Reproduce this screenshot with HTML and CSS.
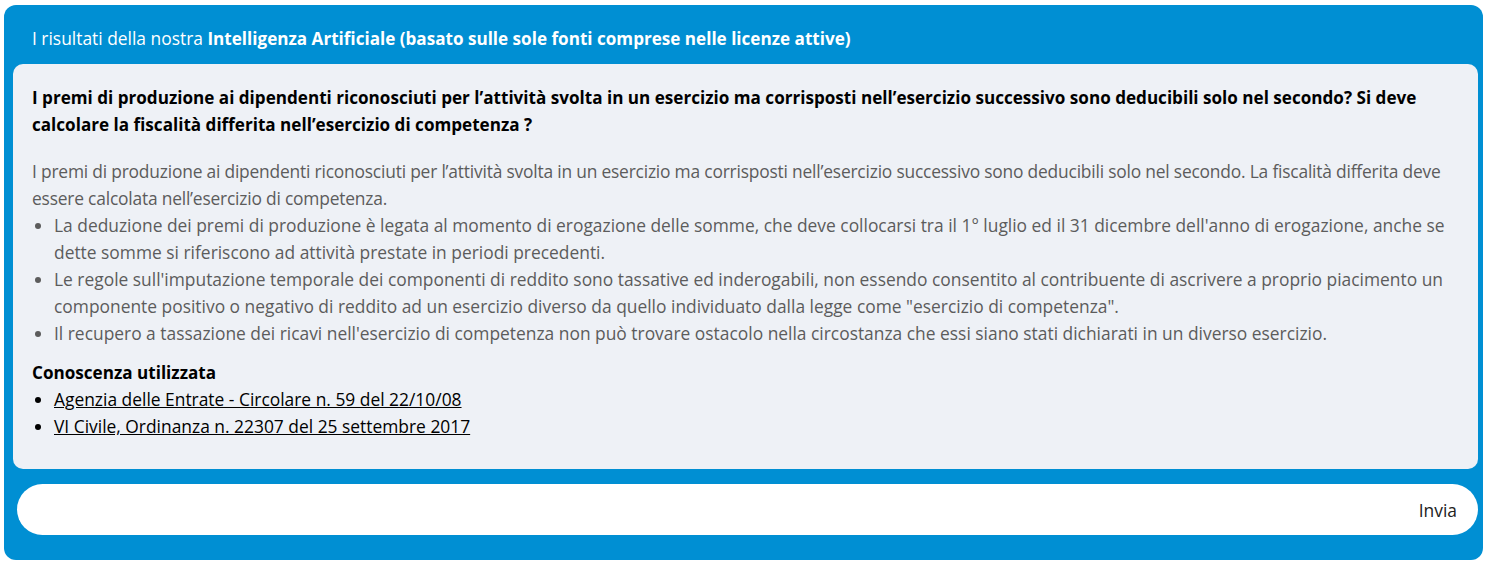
FILE: index.html
```html
<!DOCTYPE html>
<html lang="it">
<head>
    <meta charset="UTF-8">
    <title>Intelligenza Artificiale</title>
    <link rel="stylesheet" href="styles.css">
</head>
<body>
    <div class="panel">
        <div class="panel-title">I risultati della nostra <b>Intelligenza Artificiale (basato sulle sole fonti comprese nelle licenze attive)</b></div>

        <!-- Answer -->
        <div class="answer">
            <p class="question">I premi di produzione ai dipendenti riconosciuti per l’attività svolta in un esercizio ma corrisposti nell’esercizio successivo sono deducibili solo nel secondo? Si deve calcolare la fiscalità differita nell’esercizio di competenza ?</p>
            <div class="reply">
                <p>I premi di produzione ai dipendenti riconosciuti per l’attività svolta in un esercizio ma corrisposti nell’esercizio successivo sono deducibili solo nel secondo. La fiscalità differita deve essere calcolata nell’esercizio di competenza.</p>
                <ul>
                    <li>La deduzione dei premi di produzione è legata al momento di erogazione delle somme, che deve collocarsi tra il 1° luglio ed il 31 dicembre dell'anno di erogazione, anche se dette somme si riferiscono ad attività prestate in periodi precedenti.</li>
                    <li>Le regole sull'imputazione temporale dei componenti di reddito sono tassative ed inderogabili, non essendo consentito al contribuente di ascrivere a proprio piacimento un componente positivo o negativo di reddito ad un esercizio diverso da quello individuato dalla legge come "esercizio di competenza".</li>
                    <li>Il recupero a tassazione dei ricavi nell'esercizio di competenza non può trovare ostacolo nella circostanza che essi siano stati dichiarati in un diverso esercizio.</li>
                </ul>
            </div>
            <div class="sources">
                <h4>Conoscenza utilizzata</h4>
                <ul>
                    <li><a href="#">Agenzia delle Entrate - Circolare n. 59 del 22/10/08</a></li>
                    <li><a href="#">VI Civile, Ordinanza n. 22307 del 25 settembre 2017</a></li>
                </ul>
            </div>
        </div>

        <!-- Ask -->
        <form class="ask">
            <input type="text" class="ask-input">
            <button type="submit" class="ask-send">Invia</button>
        </form>
    </div>
</body>
</html>
```

FILE: styles.css
```css
body {
    margin: 0;
    padding: 5px 4px 2px 4px;
    font-family: "Open Sans", "Noto Sans", sans-serif;
    font-size: 17.4px;
    background: #fff;
}
b, .question, .sources h4 {
    font-size: 17.1px;
}
.panel {
    background: #008fd3;
    border-radius: 12px;
    padding: 0 5px 25px 9px;
}
.panel-title {
    color: #fff;
    padding: 22px 0 14px 19px;
    line-height: 22px;
}
.answer {
    background: #eef1f6;
    border-radius: 10px;
    padding: 20px 6px 29px 19px;
}
.question {
    margin: 0 0 20px 0;
    font-weight: bold;
    color: #000;
    line-height: 27px;
}
.reply {
    color: #5c5c5c;
    line-height: 27px;
}
.reply p {
    margin: 0;
    letter-spacing: -0.2px;
}
ul {
    margin: 0;
    padding-left: 22px;
}
.sources {
    margin-top: 12px;
    line-height: 27px;
}
.sources h4 {
    margin: 0;
    color: #000;
}
.sources a {
    color: #000;
}
.ask {
    display: flex;
    align-items: center;
    background: #fff;
    border-radius: 26px;
    margin: 15px 0 0 4px;
    height: 51px;
    padding: 0 21px 0 24px;
}
.ask-input {
    flex: 1;
    border: none;
    outline: none;
    font: inherit;
    background: transparent;
}
.ask-send {
    border: none;
    background: none;
    font: inherit;
    color: #222;
    cursor: pointer;
    padding: 0;
}
```
